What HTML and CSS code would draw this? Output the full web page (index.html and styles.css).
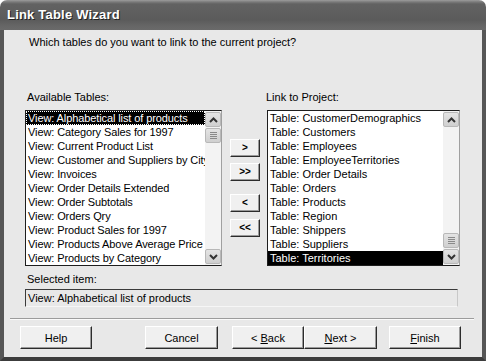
FILE: index.html
```html
<!DOCTYPE html>
<html lang="en">
<head>
    <meta charset="UTF-8">
    <title>Link Table Wizard</title>
    <link rel="stylesheet" href="styles.css">
</head>
<body>

<div class="window">
    <div class="titlebar">Link Table Wizard</div>

    <div class="client">
        <p class="prompt">Which tables do you want to link to the current project?</p>

        <div class="pickers">
            <!-- tables that can still be linked -->
            <div class="picker picker-left">
                <div class="label">Available Tables:</div>
                <div class="listbox">
                    <ul class="rows">
                        <li class="selected focused">View: Alphabetical list of products</li>
                        <li>View: Category Sales for 1997</li>
                        <li>View: Current Product List</li>
                        <li>View: Customer and Suppliers by City</li>
                        <li>View: Invoices</li>
                        <li>View: Order Details Extended</li>
                        <li>View: Order Subtotals</li>
                        <li>View: Orders Qry</li>
                        <li>View: Product Sales for 1997</li>
                        <li>View: Products Above Average Price</li>
                        <li>View: Products by Category</li>
                    </ul>
                    <div class="scrollbar">
                        <div class="arrow up"><svg width="9" height="6" viewBox="0 0 9 6"><path d="M1 5 L4.5 1.5 L8 5" fill="none" stroke="#333" stroke-width="2"/></svg></div>
                        <div class="track">
                            <div class="thumb"><span></span><span></span><span></span><span></span></div>
                        </div>
                        <div class="arrow down"><svg width="9" height="6" viewBox="0 0 9 6"><path d="M1 1 L4.5 4.5 L8 1" fill="none" stroke="#333" stroke-width="2"/></svg></div>
                    </div>
                </div>
            </div>

            <div class="movers">
                <button class="mover mv-one">&gt;</button>
                <button class="mover mv-all">&gt;&gt;</button>
                <button class="mover mv-back">&lt;</button>
                <button class="mover mv-none">&lt;&lt;</button>
            </div>

            <!-- tables already picked -->
            <div class="picker picker-right">
                <div class="label">Link to Project:</div>
                <div class="listbox">
                    <ul class="rows">
                        <li>Table: CustomerDemographics</li>
                        <li>Table: Customers</li>
                        <li>Table: Employees</li>
                        <li>Table: EmployeeTerritories</li>
                        <li>Table: Order Details</li>
                        <li>Table: Orders</li>
                        <li>Table: Products</li>
                        <li>Table: Region</li>
                        <li>Table: Shippers</li>
                        <li>Table: Suppliers</li>
                        <li class="selected">Table: Territories</li>
                    </ul>
                    <div class="scrollbar">
                        <div class="arrow up"><svg width="9" height="6" viewBox="0 0 9 6"><path d="M1 5 L4.5 1.5 L8 5" fill="none" stroke="#333" stroke-width="2"/></svg></div>
                        <div class="track track-end">
                            <div class="thumb"><span></span><span></span><span></span><span></span></div>
                        </div>
                        <div class="arrow down"><svg width="9" height="6" viewBox="0 0 9 6"><path d="M1 1 L4.5 4.5 L8 1" fill="none" stroke="#333" stroke-width="2"/></svg></div>
                    </div>
                </div>
            </div>
        </div>

        <div class="label label-selected">Selected item:</div>
        <div class="selected-box">View: Alphabetical list of products</div>

        <div class="separator"></div>

        <div class="nav">
            <button class="btn btn-help">Help</button>
            <button class="btn btn-cancel">Cancel</button>
            <button class="btn btn-back">&lt; <u>B</u>ack</button>
            <button class="btn btn-next"><u>N</u>ext &gt;</button>
            <button class="btn btn-finish"><u>F</u>inish</button>
        </div>
    </div>
</div>

</body>
</html>
```

FILE: styles.css
```css
body {
    margin: 0;
    padding: 0;
    background: #ffffff;
    font-family: 'Liberation Sans', Arial, sans-serif;
    font-size: 11px;
    color: #000;
}

.window {
    width: 486px;
    height: 361px;
    display: flex;
    flex-direction: column;
}

.titlebar {
    height: 30px;
    box-sizing: border-box;
    padding: 6px 0 0 7px;
    border-radius: 7px 7px 0 0;
    background: linear-gradient(#9c9c9c 0, #7a7a7a 2px, #626262 4px, #5b5b5b 20px, #666 26px, #6a6a6a 30px);
    color: #fff;
    font-family: 'Liberation Sans', Arial, sans-serif;
    font-weight: bold;
    font-size: 13px;
    line-height: 17px;
    letter-spacing: 0.2px;
    text-shadow: 1px 1px 0 #222;
}

.client {
    flex: 1;
    background: #e8e8e8;
    border: 4px solid #565656;
    border-top: none;
    border-bottom-color: #3c3c3c;
    padding: 5px 0 0 21px;
}

.prompt {
    margin: 0 0 41px 4px;
    line-height: 14px;
}

.label {
    line-height: 14px;
    margin: 0 0 6px 2px;
}

.pickers {
    display: flex;
}

.picker-left {
    width: 197px;
}

.picker-right {
    width: 193px;
}

.picker-right .label {
    margin-left: -1px;
}

.listbox {
    height: 154px;
    display: flex;
    background: #fff;
    border: 1px solid #1e1e1e;
    border-right-color: #a0a0a0;
}

.rows {
    flex: 1;
    margin: 0;
    padding: 0;
    list-style: none;
    overflow: hidden;
}

.rows li {
    height: 14px;
    line-height: 14px;
    padding-left: 2px;
    white-space: nowrap;
    overflow: hidden;
}

.picker-left .rows li {
    letter-spacing: -0.1px;
}

.rows li.selected {
    background: #000;
    color: #fff;
}

.rows li.focused {
    outline: 1px dotted #fff;
    outline-offset: -1px;
}

.scrollbar {
    width: 16px;
    display: flex;
    flex-direction: column;
    background: #f3f3f3;
}

.arrow,
.thumb {
    height: 15px;
    box-sizing: border-box;
    margin: 1px 0 0 0;
    border: 1px solid #b8b8b8;
    border-radius: 2px;
    background: linear-gradient(#e4e4e4, #cfcfcf);
    display: flex;
    align-items: center;
    justify-content: center;
}

.track {
    flex: 1;
    display: flex;
    flex-direction: column;
}

.track-end {
    justify-content: flex-end;
}

.thumb {
    flex-direction: column;
    gap: 1px;
}

.thumb span {
    width: 7px;
    height: 1px;
    background: #8a8a8a;
}

.arrow.down {
    margin-bottom: 1px;
}

.movers {
    width: 30px;
    margin: 0 7px 0 8px;
    padding-top: 49px;
    display: flex;
    flex-direction: column;
}

button {
    font-family: 'Liberation Sans', Arial, sans-serif;
    font-size: 11px;
    color: #000;
    background: #f0f0f0;
    border: 1px solid;
    border-color: #fff #2c2c2c #2c2c2c #fff;
    box-shadow: inset -1px -1px 0 #9a9a9a;
    padding: 0;
}

.mover {
    height: 18px;
    font-weight: bold;
    font-size: 10px;
    line-height: 14px;
}

.mv-all {
    margin-top: 6px;
}

.mv-back {
    margin-top: 13px;
}

.mv-none {
    margin-top: 7px;
}

.label-selected {
    margin-top: 6px;
    margin-bottom: 3px;
}

.selected-box {
    width: 433px;
    height: 18px;
    box-sizing: border-box;
    border: 1px solid #3a3a3a;
    border-right-color: #c8c8c8;
    border-bottom-color: #f6f6f6;
    padding-left: 2px;
    line-height: 16px;
}

.separator {
    margin: 11px 8px 0 -15px;
    height: 1px;
    background: #9c9c9c;
    border-bottom: 1px solid #fafafa;
}

.nav {
    display: flex;
    margin: 6px 0 0 -5px;
}

.btn {
    width: 72px;
    height: 23px;
}

.btn-cancel {
    width: 73px;
    margin-left: 53px;
}

.btn-back {
    margin-left: 14px;
}

.btn-next {
    width: 73px;
}

.btn-finish {
    margin-left: 12px;
}
```
